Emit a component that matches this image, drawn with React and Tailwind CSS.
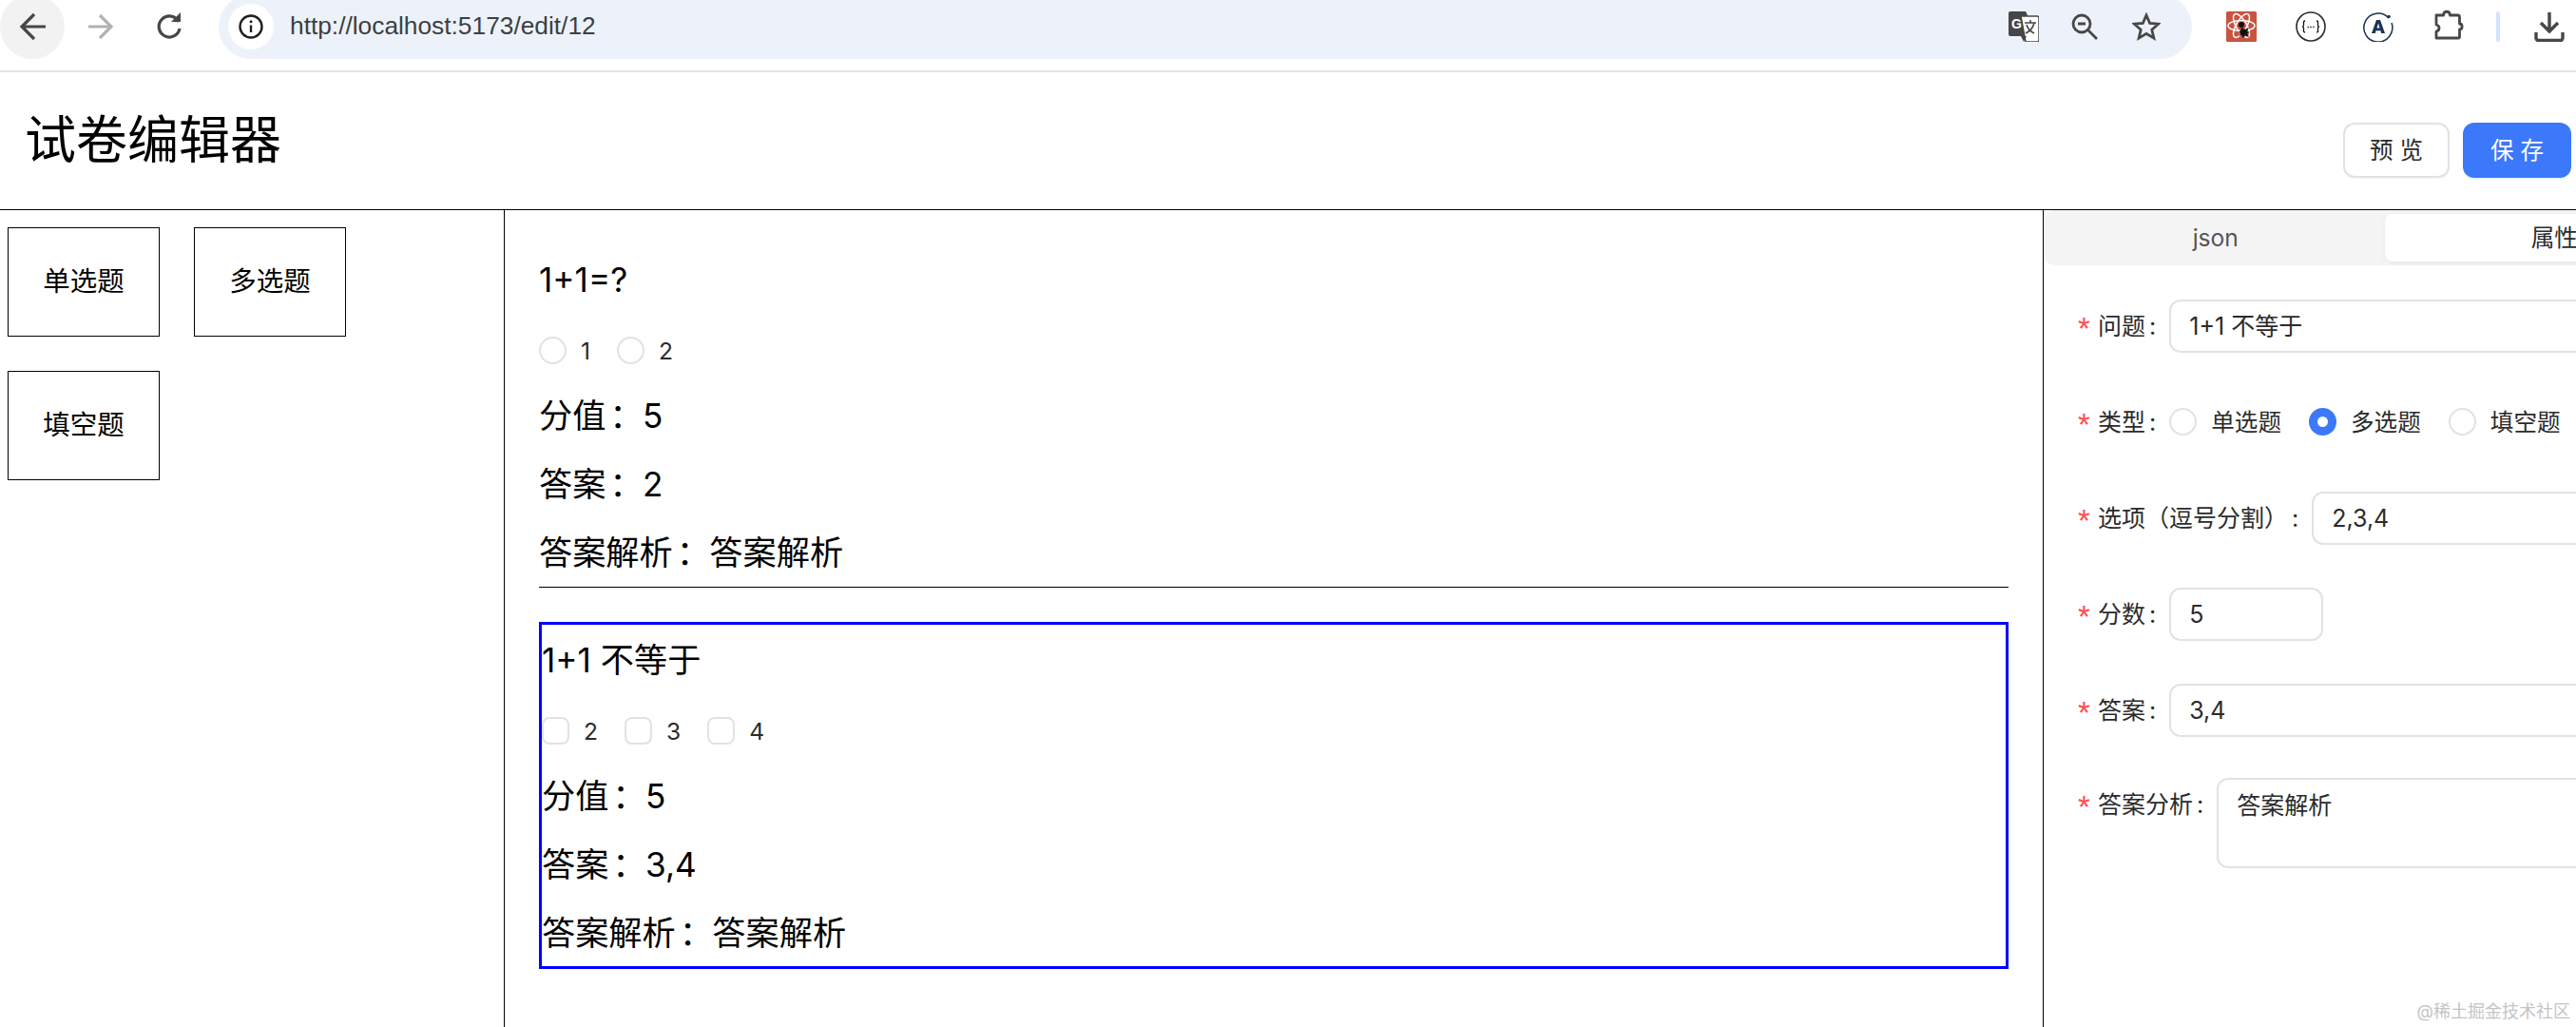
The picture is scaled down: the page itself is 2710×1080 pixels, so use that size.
import React from 'react';

const FONT = "font-['Inter','Noto_Sans_CJK_SC',sans-serif]";

const ICON = {
  back: <path d="M24 9 11 22l13 13M12 22h24" fill="none" stroke="#474747" strokeWidth="3.2" />,
  forward: <path d="M23 10l12 12-12 12M35 22H11" fill="none" stroke="#b2b2b2" strokeWidth="3.2" />,
  reload: (
    <>
      <path d="M34 17A11 11 0 1 0 35 24" fill="none" stroke="#474747" strokeWidth="3.2" />
      <path d="M26 17h10V7z" fill="#474747" />
    </>
  ),
};

const Toolbar = ({ d, className = 'w-11 h-11' }) => (
  <svg viewBox="0 0 44 44" className={className}>{d}</svg>
);

const TranslateIcon = () => (
  <svg viewBox="0 0 32 32" className="w-8 h-8 mr-[34px]">
    <path d="M2 0h16l2 4 1 22H2a2 2 0 0 1-2-2V2a2 2 0 0 1 2-2z" fill="#474747" />
    <path d="M13 5h17a2 2 0 0 1 2 2v23a2 2 0 0 1-2 2H18z" fill="#fff" stroke="#474747" strokeWidth="1.5" />
    <path d="M13 26l3 6 3-6z" fill="#474747" />
    <text x="3" y="18" fontSize="14" fontWeight="700" fill="#fff" fontFamily="Liberation Sans">G</text>
    <path d="M17 12h12M23 9v3M27 12c-1 5-5 9-9 11M19 14c1 4 4 7 8 9" fill="none" stroke="#474747" strokeWidth="1.6" />
  </svg>
);

const ZoomIcon = () => (
  <svg viewBox="0 0 28 28" className="w-7 h-7 mr-[36px]">
    <circle cx="11" cy="11" r="9" fill="none" stroke="#474747" strokeWidth="2.8" />
    <path d="M7 11h8M17 17l10 10" fill="none" stroke="#474747" strokeWidth="2.8" />
  </svg>
);

const StarIcon = () => (
  <svg viewBox="0 0 30 30" className="w-[30px] h-[30px]">
    <path d="M15 3l3.6 8.4 9.1.8-6.9 6 2.1 8.9L15 22.4l-7.9 4.7 2.1-8.9-6.9-6 9.1-.8z" fill="none" stroke="#474747" strokeWidth="2.8" />
  </svg>
);

const ReactDevIcon = () => (
  <svg viewBox="0 0 32 32" className="w-8 h-8">
    <rect width="32" height="32" rx="1.5" fill="#c85440" />
    <g fill="none" stroke="#fff" strokeWidth="1.5">
      <ellipse cx="16" cy="15" rx="14" ry="5.5" />
      <ellipse cx="16" cy="15" rx="14" ry="5.5" transform="rotate(60 16 15)" />
      <ellipse cx="16" cy="15" rx="14" ry="5.5" transform="rotate(120 16 15)" />
    </g>
    <circle cx="16" cy="14" r="3" fill="#111" />
    <path d="M16 17l4 2 4-2-2 4 3 1-3 1 2 4-4-2-2 3-2-3-2 1 1-3-2-1 2-2z" fill="#111" />
  </svg>
);

const BracesIcon = () => (
  <svg viewBox="0 0 32 32" className="w-8 h-8">
    <circle cx="16" cy="16" r="15" fill="#fff" stroke="#2b2b2b" strokeWidth="1.6" />
    <path d="M10 10c-2 0-1.500 1.500-1.500 3.500S8.500 16 7 16c1.500 0 1.500.5 1.500 2.500S8 22 10 22M22 10c2 0 1.500 1.500 1.500 3.500S23.500 16 25 16c-1.500 0-1.500.5-1.500 2.500S24 22 22 22" fill="none" stroke="#111" strokeWidth="1.3" />
    <path d="M12.500 16.500h1.500M15.300 16.500h1.500M18.100 16.500h1.500" stroke="#333" strokeWidth="1.4" />
  </svg>
);

const AccentIcon = () => (
  <svg viewBox="0 0 32 32" className="w-8 h-8">
    <path d="M27 7A15 15 0 1 0 30 12" fill="none" stroke="#1b3358" strokeWidth="1.5" />
    <circle cx="27" cy="5.500" r="1.800" fill="#1b3358" />
    <path d="M9 23 14 9h4l5 14h-3.800l-.8-2.800h-4.800L12.800 23zM14.500 17.500h3L16 12.500z" fill="#1b3358" fillRule="evenodd" />
  </svg>
);

const PuzzleIcon = () => (
  <svg viewBox="0 0 32 32" className="w-8 h-8">
    <path d="M3 6h7.500c.5-5 6.500-5 7 0h8a2 2 0 0 1 2 2v7c3.500 0 3.500 6 0 6v7.500a1.500 1.500 0 0 1-1.500 1.500H3v-7c4-1 4-6 0-7z" fill="none" stroke="#474747" strokeWidth="2.8" strokeLinejoin="round" />
  </svg>
);

const DownloadIcon = () => (
  <svg viewBox="0 0 32 32" className="w-8 h-8">
    <path d="M16 1v20M7 12l9 9 9-9" fill="none" stroke="#474747" strokeWidth="3.4" />
    <path d="M2 22v6a2.500 2.500 0 0 0 2.500 2.500h23A2.500 2.500 0 0 0 30 28v-6" fill="none" stroke="#474747" strokeWidth="3.4" />
  </svg>
);

const BrowserBar = () => (
  <div className="h-[76px] shrink-0 flex items-start border-b-2 border-[#e3e3e3] bg-white">
    <div className="w-[68px] h-[68px] -mt-[6px] rounded-full bg-[#f2f2f2] flex items-center justify-center">
      <Toolbar d={ICON.back} />
    </div>
    <div className="w-[72px] h-[56px] flex items-center justify-center"><Toolbar d={ICON.forward} /></div>
    <div className="w-[72px] h-[56px] flex items-center justify-center"><Toolbar d={ICON.reload} /></div>
    <div className="ml-[18px] w-[2076px] h-[68px] -mt-[6px] rounded-full bg-[#edf2fa] flex items-center pl-[10px]">
      <div className="w-[48px] h-[48px] rounded-full bg-white flex items-center justify-center">
        <svg viewBox="0 0 28 28" className="w-7 h-7">
          <circle cx="14" cy="14" r="11.5" fill="none" stroke="#1f1f1f" strokeWidth="2.4" />
          <path d="M14 12.500V20" stroke="#1f1f1f" strokeWidth="2.4" />
          <circle cx="14" cy="8.800" r="1.5" fill="#1f1f1f" />
        </svg>
      </div>
      <span className="ml-[17px] text-[26.3px] text-[#3c3f43] font-['Liberation_Sans']">http://localhost:5173/edit/12</span>
      <div className="ml-auto flex items-center pr-[33px]">
        <TranslateIcon />
        <ZoomIcon />
        <StarIcon />
      </div>
    </div>
    <div className="h-[56px] flex items-center pl-[36px]">
      <ReactDevIcon />
      <div className="ml-[41px]"><BracesIcon /></div>
      <div className="ml-[39px]"><AccentIcon /></div>
      <div className="ml-[42px] -mt-1"><PuzzleIcon /></div>
      <div className="ml-[34px] w-[4px] h-8 rounded-full bg-[#d3e3fd]" />
      <div className="ml-[36px]"><DownloadIcon /></div>
    </div>
  </div>
);

const Header = () => (
  <div className="h-[144px] shrink-0 flex items-center justify-between pl-[26px] pr-[5px]">
    <h1 className="text-[54px] leading-none text-black">试卷编辑器</h1>
    <div className="flex gap-[14px] mt-[20px]">
      <button className="w-[112px] h-[58px] rounded-xl border-2 border-[#e2e2e2] bg-white text-[24.6px] text-[#2b2b2b] shadow-[0_2px_0_rgba(0,0,0,0.02)]">预 览</button>
      <button className="w-[114px] h-[58px] rounded-xl bg-[#3b78fa] text-[24.6px] text-white shadow-[0_2px_0_rgba(5,145,255,0.1)]">保 存</button>
    </div>
  </div>
);

const Material = ({ name }) => (
  <div className="w-[160px] h-[115px] border border-black flex items-center justify-center text-[28.5px] text-black">{name}</div>
);

// palt drops the colon's side space, so it sits close to the label like the original
const Colon = () => <span className="font-['Noto_Sans_CJK_TC'] [font-feature-settings:'palt'] ml-[4px] mr-[17px]">：</span>;

const Line = ({ label, value }) => (
  <p className="h-[50px] mt-[22px] flex items-center text-[35.2px] text-black whitespace-pre">
    {label}<Colon />{value}
  </p>
);

const Question = ({ title, options, kind, score, answer }) => (
  <>
    <p className="h-[50px] flex items-center text-[35.2px] text-black whitespace-pre">{title}</p>
    <div className="h-[42px] mt-[29px] flex items-center">
      {options.map((o) => (
        <div key={o} className={kind === 'radio' ? 'flex items-center mr-[28px]' : 'flex items-center mr-[28px]'}>
          <span className={kind === 'radio' ? 'w-[29px] h-[29px] rounded-full border-2 border-[#e2e2e2]' : 'w-[29px] h-[29px] rounded-lg border-2 border-[#e2e2e2]'} />
          <span className="ml-[15px] text-[24.6px] text-[#2b2b2b]">{o}</span>
        </div>
      ))}
    </div>
    <Line label="分值" value={score} />
    <Line label="答案" value={answer} />
    <Line label="答案解析" value="答案解析" />
  </>
);

const Field = ({ label, className, children }) => (
  <div className={`flex ${className}`}>
    <label className="shrink-0 flex items-center h-[56px] pt-[2px] text-[25px] text-[#2b2b2b]">
      <span className="w-[21px] h-[54px] pt-[12px] text-[#ff4d4f] text-[33px] leading-none font-['Liberation_Sans']">*</span>
      <span>{label}</span>
      <span className="ml-[4px] mr-[14px]">:</span>
    </label>
    {children}
  </div>
);

const inputCls = 'h-[56px] rounded-xl border-2 border-[#e2e2e2] flex items-center px-[19px] pt-[2px] text-[25px] text-[#2b2b2b]';

const Prop = ({ name, checked }) => (
  <div className="flex items-center mr-[29px] whitespace-nowrap">
    <span className={checked ? 'w-[29px] h-[29px] rounded-full border-[9px] border-[#3b78fa] bg-white' : 'w-[29px] h-[29px] rounded-full border-2 border-[#e2e2e2]'} />
    <span className="ml-[15px] text-[24.6px] text-[#2b2b2b]">{name}</span>
  </div>
);

const Setting = () => (
  <div className="w-[720px]">
    <div className="h-[58px] flex bg-[#f4f4f4] rounded-xl p-[4px] pl-0">
      <div className="w-[361px] flex items-center justify-center pl-[3px] text-[24.6px] text-[#555]">json</div>
      <div className="w-[360px] flex items-center justify-center rounded-lg bg-white text-[24.6px] text-[#2b2b2b] shadow-[0_2px_6px_rgba(0,0,0,0.05)]">属性</div>
    </div>
    <div className="pl-[36px] pt-[36px]">
      <Field label="问题"><div className={`${inputCls} flex-1`}>1+1 不等于</div></Field>
      <Field label="类型" className="mt-[45px]">
        <div className="h-[56px] flex items-center"><Prop name="单选题" /><Prop checked name="多选题" /><Prop name="填空题" /></div>
      </Field>
      <Field label="选项（逗号分割）" className="mt-[45px]"><div className={`${inputCls} flex-1`}>2,3,4</div></Field>
      <Field label="分数" className="mt-[45px]"><div className={`${inputCls} w-[162px]`}>5</div></Field>
      <Field label="答案" className="mt-[45px]"><div className={`${inputCls} flex-1`}>3,4</div></Field>
      <Field label="答案分析" className="mt-[43px]">
        <div className="flex-1 h-[95px] rounded-xl border-2 border-[#e2e2e2] px-[19px] pt-[9px] text-[25px] text-[#2b2b2b]">答案解析</div>
      </Field>
    </div>
  </div>
);

export default function App() {
  return (
    <div className={`relative w-[2710px] h-[1080px] overflow-hidden flex flex-col bg-white ${FONT}`}>
      <BrowserBar />
      <Header />
      <div className="flex-1 flex border-t border-black min-h-0">
        <div className="w-[531px] shrink-0 border-r border-black pl-[8px] pt-[18px]">
          <div className="flex flex-wrap gap-[36px] w-[400px]">
            <Material name="单选题" />
            <Material name="多选题" />
            <Material name="填空题" />
          </div>
        </div>
        <div className="w-[1619px] shrink-0 border-r border-black pl-[36px] pr-[36px] pt-[48px]">
          <div className="border-b border-black pb-[11px] mb-[36px]">
            <Question title="1+1=?" options={['1', '2']} kind="radio" score="5" answer="2" />
          </div>
          <div className="border-[3px] border-[#0000ff] h-[365px] pt-[12px]">
            <Question title="1+1 不等于" options={['2', '3', '4']} kind="checkbox" score="5" answer="3,4" />
          </div>
        </div>
        <Setting />
      </div>
      <div className="absolute right-[6px] bottom-[5px] text-[18px] leading-[22px] text-[#c4c4c4]">@稀土掘金技术社区</div>
    </div>
  );
}
